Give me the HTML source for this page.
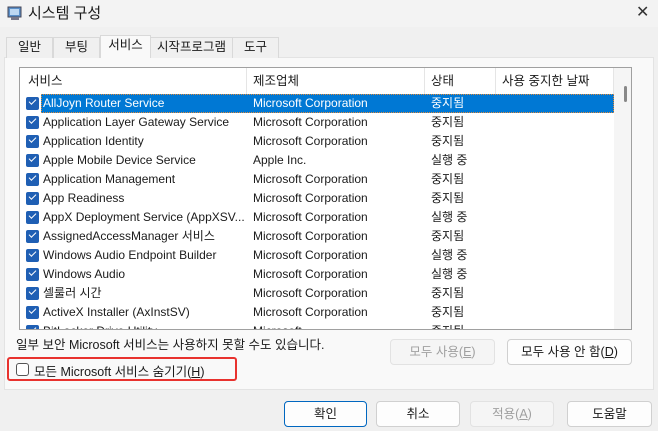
<!DOCTYPE html>
<html><head><meta charset="utf-8"><style>
*{box-sizing:border-box;margin:0;padding:0}
body{width:658px;height:431px;background:#f0f0f0;font-family:"Liberation Sans","Noto Sans CJK KR",sans-serif;font-size:12px;color:#1a1a1a;position:relative;overflow:hidden}
.a{position:absolute}
.title{left:0;top:0;width:658px;height:27px;background:#f3f3f3}
.tab{position:absolute;top:37px;height:21px;border:1px solid #d9d9d9;border-bottom:none;background:#f0f0f0;text-align:center;line-height:19px;font-size:12.5px}
.panel{left:4px;top:57px;width:650px;height:333px;background:#f9f9f9;border:1px solid #e3e3e3}
.list{left:19px;top:67px;width:613px;height:263px;background:#fff;border:1px solid #a0a0a0;overflow:hidden}
.hdr{position:absolute;top:0;height:26px;line-height:26px;font-size:12.5px}
.hdiv{position:absolute;top:0;width:1px;height:26px;background:#e5e5e5}
.row{position:absolute;left:0;width:594px;height:19px;line-height:19px;font-size:12px}
.row span{position:absolute;top:0}
.cb{position:absolute;left:6px;top:3px;width:13px;height:13px;background:#1f5fb4;border-radius:2px}
.cb:after{content:"";position:absolute;left:3px;top:2px;width:6px;height:3px;border-left:1.3px solid #fff;border-bottom:1.3px solid #fff;transform:rotate(-45deg)}
.sel{background:#0078d4;color:#fff}
.btn{position:absolute;height:26px;border:1px solid #d0d0d0;border-radius:4px;background:#fdfdfd;text-align:center;line-height:24px;font-size:12.5px}
.dis{color:#a0a0a0;background:#f5f5f5;border-color:#e2e2e2}
</style></head><body>
<div class="a title"></div>
<svg class="a" style="left:7px;top:5px" width="16" height="16"><rect x="1" y="2" width="13" height="10" fill="#5a8fc9" stroke="#445" stroke-width="1"/><rect x="3" y="4" width="9" height="6" fill="#bcd7f2"/><rect x="4" y="12" width="8" height="3" fill="#778"/></svg>
<div class="a" style="left:28px;top:2px;font-size:15px">시스템 구성</div>
<div class="a" style="left:636px;top:2px;font-size:16px;color:#333">✕</div>
<div class="a panel"></div>
<div class="tab" style="left:6px;width:47px">일반</div>
<div class="tab" style="left:53px;width:47px">부팅</div>
<div class="tab" style="left:100px;width:51px;top:35px;height:23px;background:#f9f9f9;z-index:2">서비스</div>
<div class="tab" style="left:150px;width:83px">시작프로그램</div>
<div class="tab" style="left:232px;width:47px">도구</div>
<div class="a list">
<div class="hdr" style="left:8px">서비스</div>
<div class="hdiv" style="left:226px"></div>
<div class="hdr" style="left:233px">제조업체</div>
<div class="hdiv" style="left:404px"></div>
<div class="hdr" style="left:411px">상태</div>
<div class="hdiv" style="left:475px"></div>
<div class="hdr" style="left:482px">사용 중지한 날짜</div>
<div class="hdiv" style="left:593px"></div>
<div class="a" style="left:594px;top:0;width:18px;height:262px;background:#f5f5f5"></div>
<div class="a" style="left:604px;top:18px;width:3px;height:16px;background:#888;border-radius:2px"></div>
<div class="row" style="top:26px"><div class="cb"></div><div class="a sel" style="left:21px;top:0;width:573px;height:19px;border:1px dotted #e08a3a"></div><span style="left:23px;color:#fff">AllJoyn Router Service</span><span style="left:233px;color:#fff">Microsoft Corporation</span><span style="left:411px;color:#fff">중지됨</span></div>
<div class="row" style="top:45px"><div class="cb"></div><span style="left:23px">Application Layer Gateway Service</span><span style="left:233px">Microsoft Corporation</span><span style="left:411px">중지됨</span></div>
<div class="row" style="top:64px"><div class="cb"></div><span style="left:23px">Application Identity</span><span style="left:233px">Microsoft Corporation</span><span style="left:411px">중지됨</span></div>
<div class="row" style="top:83px"><div class="cb"></div><span style="left:23px">Apple Mobile Device Service</span><span style="left:233px">Apple Inc.</span><span style="left:411px">실행 중</span></div>
<div class="row" style="top:102px"><div class="cb"></div><span style="left:23px">Application Management</span><span style="left:233px">Microsoft Corporation</span><span style="left:411px">중지됨</span></div>
<div class="row" style="top:121px"><div class="cb"></div><span style="left:23px">App Readiness</span><span style="left:233px">Microsoft Corporation</span><span style="left:411px">중지됨</span></div>
<div class="row" style="top:140px"><div class="cb"></div><span style="left:23px">AppX Deployment Service (AppXSV...</span><span style="left:233px">Microsoft Corporation</span><span style="left:411px">실행 중</span></div>
<div class="row" style="top:159px"><div class="cb"></div><span style="left:23px">AssignedAccessManager 서비스</span><span style="left:233px">Microsoft Corporation</span><span style="left:411px">중지됨</span></div>
<div class="row" style="top:178px"><div class="cb"></div><span style="left:23px">Windows Audio Endpoint Builder</span><span style="left:233px">Microsoft Corporation</span><span style="left:411px">실행 중</span></div>
<div class="row" style="top:197px"><div class="cb"></div><span style="left:23px">Windows Audio</span><span style="left:233px">Microsoft Corporation</span><span style="left:411px">실행 중</span></div>
<div class="row" style="top:216px"><div class="cb"></div><span style="left:23px">셀룰러 시간</span><span style="left:233px">Microsoft Corporation</span><span style="left:411px">중지됨</span></div>
<div class="row" style="top:235px"><div class="cb"></div><span style="left:23px">ActiveX Installer (AxInstSV)</span><span style="left:233px">Microsoft Corporation</span><span style="left:411px">중지됨</span></div>
<div class="row" style="top:254px"><div class="cb"></div><span style="left:23px">BitLocker Drive Utility</span><span style="left:233px">Microsoft</span><span style="left:411px">중지됨</span></div>
</div>
<div class="a" style="left:16px;top:334px;font-size:12.5px">일부 보안 Microsoft 서비스는 사용하지 못할 수도 있습니다.</div>
<div class="btn dis" style="left:390px;top:339px;width:105px">모두 사용(<u>E</u>)</div>
<div class="btn" style="left:507px;top:339px;width:125px">모두 사용 안 함(<u>D</u>)</div>
<div class="a" style="left:7px;top:357px;width:230px;height:24px;border:2px solid #e8322e;border-radius:3px"></div>
<div class="a" style="left:16px;top:363px;width:13px;height:13px;border:1px solid #555;border-radius:3px;background:#fff"></div>
<div class="a" style="left:34px;top:361px;font-size:12.5px">모든 Microsoft 서비스 숨기기(<u>H</u>)</div>
<div class="btn" style="left:284px;top:401px;width:83px;border:1.5px solid #0067c0">확인</div>
<div class="btn" style="left:376px;top:401px;width:84px">취소</div>
<div class="btn dis" style="left:470px;top:401px;width:84px">적용(<u>A</u>)</div>
<div class="btn" style="left:567px;top:401px;width:85px">도움말</div>
</body></html>
